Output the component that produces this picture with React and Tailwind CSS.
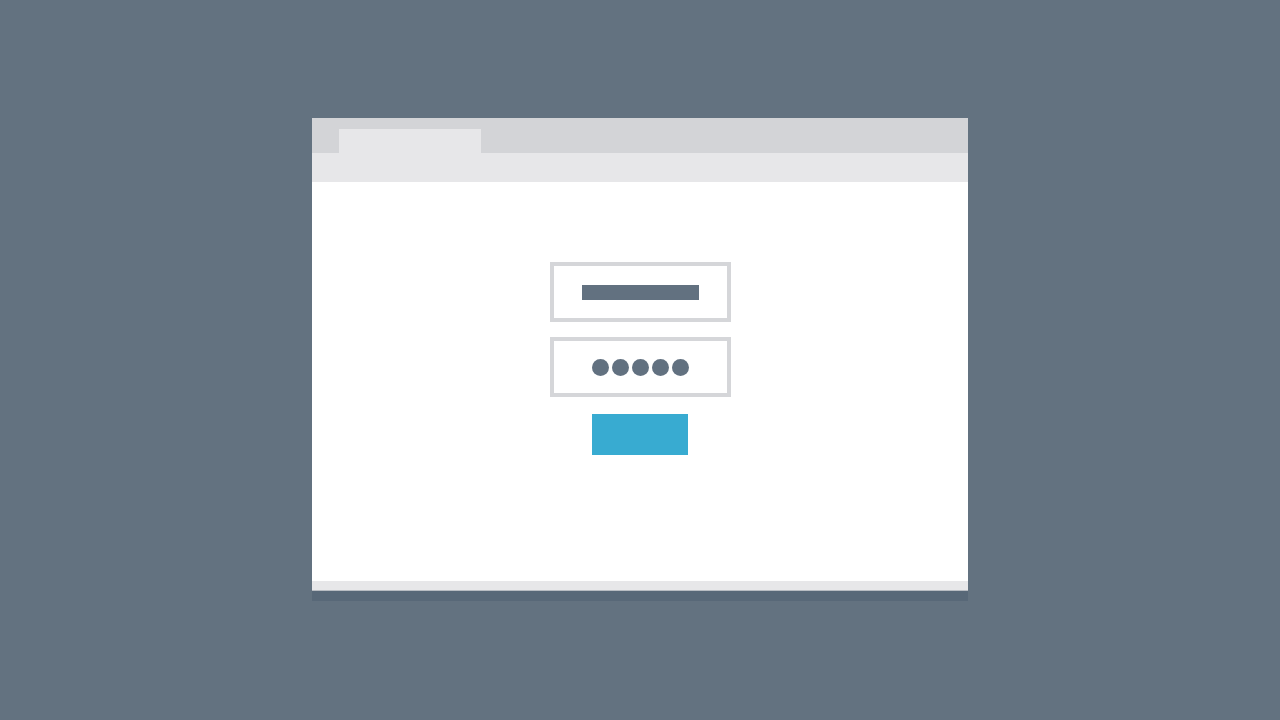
import React from 'react';

export default function App() {
  return (
    <div className="w-[1280px] h-[720px] bg-[#637280] flex flex-col items-center pt-[118px] overflow-hidden">
      {/* Browser window */}
      <div className="w-[656px] flex flex-col shadow-[0_10px_0_0_#586878]">
        {/* Tab strip */}
        <div className="h-[35px] bg-[#d3d4d7] flex items-end pl-[27px]">
          <div className="w-[142px] h-[24px] bg-[#e7e7e9]" />
        </div>
        {/* Toolbar */}
        <div className="h-[29px] bg-[#e7e7e9]" />
        {/* Page */}
        <div className="h-[399px] bg-white flex flex-col items-center pt-[80px]">
          <div className="w-[181px] h-[60px] border-4 border-[#d5d6d9] flex items-center justify-center">
            <div className="w-[117px] h-[15px] bg-[#627180]" />
          </div>
          <div className="mt-[15px] w-[181px] h-[60px] border-4 border-[#d5d6d9] flex items-center justify-center gap-[3px]">
            <div className="w-[17px] h-[17px] rounded-full bg-[#627180]" />
            <div className="w-[17px] h-[17px] rounded-full bg-[#627180]" />
            <div className="w-[17px] h-[17px] rounded-full bg-[#627180]" />
            <div className="w-[17px] h-[17px] rounded-full bg-[#627180]" />
            <div className="w-[17px] h-[17px] rounded-full bg-[#627180]" />
          </div>
          <div className="mt-[17px] w-[96px] h-[41px] bg-[#38abd1]" />
        </div>
        {/* Status bar */}
        <div className="h-[10px] bg-[#e7e7e9] border-b border-[#b8bcc2]" />
      </div>
    </div>
  );
}
